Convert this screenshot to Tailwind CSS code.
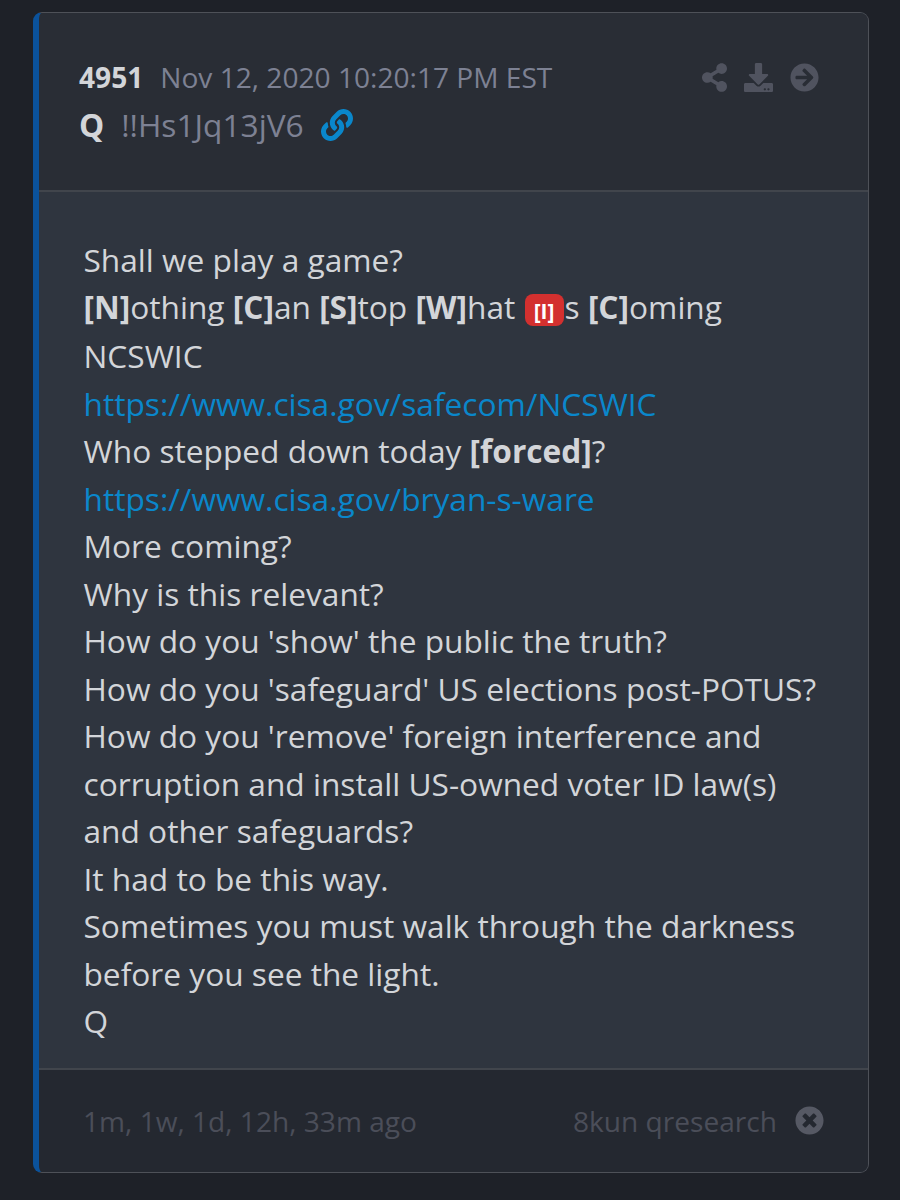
<!DOCTYPE html>
<html lang="en">
<head>
    <meta charset="UTF-8">
    <meta name="viewport" content="width=device-width, initial-scale=1.0">
    <title>4951</title>
    <script src="https://cdn.jsdelivr.net/npm/@tailwindcss/browser@4"></script>
</head>
<body class="bg-[#1e2128] min-h-screen pt-3 pl-[33px] pr-[31px] font-['Open_Sans',sans-serif] text-[#d3d5d9]">
    <article class="h-[1161px] flex flex-col bg-[#2f353f] border border-[#4e5158] border-l-[6px] border-l-[#0b529b] rounded-[9px] overflow-hidden">
        <!-- header -->
        <header class="h-[179px] shrink-0 bg-[#292d35] border-b-2 border-[#41454c] pl-10 pr-[49px] pt-[43px]">
            <div class="flex items-center justify-between h-[42px]">
                <div class="flex items-center gap-[17px] text-[28.1px] whitespace-nowrap">
                    <span class="font-bold">4951</span>
                    <time class="text-[#7d8193]">Nov 12, 2020 10:20:17 PM EST</time>
                </div>
                <div class="flex items-center gap-[17px] text-[#50535f]">
                    <svg class="h-[29px] w-[25px]" viewBox="0 0 448 512" fill="currentColor"><path d="M352 320c-22.608 0-43.387 7.819-59.79 20.895l-102.486-64.054a96.551 96.551 0 0 0 0-41.683l102.486-64.054C308.613 184.181 329.392 192 352 192c53.019 0 96-42.981 96-96S405.019 0 352 0s-96 42.981-96 96c0 7.158.79 14.13 2.276 20.841L155.79 180.895C139.387 167.819 118.608 160 96 160c-53.019 0-96 42.981-96 96s42.981 96 96 96c22.608 0 43.387-7.819 59.79-20.895l102.486 64.054A96.301 96.301 0 0 0 256 416c0 53.019 42.981 96 96 96s96-42.981 96-96-42.981-96-96-96z"/></svg>
                    <svg class="size-[29px]" viewBox="0 0 512 512" fill="currentColor"><path d="M216 0h80c13.3 0 24 10.7 24 24v168h87.7c17.8 0 26.7 21.5 14.1 34.1L269.7 378.3c-7.5 7.5-19.8 7.5-27.3 0L90.1 226.1c-12.6-12.6-3.7-34.1 14.1-34.1H192V24c0-13.3 10.7-24 24-24zm296 376v112c0 13.3-10.7 24-24 24H24c-13.3 0-24-10.7-24-24V376c0-13.3 10.7-24 24-24h146.7l49 49c20.1 20.1 52.5 20.1 72.6 0l49-49H488c13.3 0 24 10.7 24 24zm-124 88c0-11-9-20-20-20s-20 9-20 20 9 20 20 20 20-9 20-20zm64 0c0-11-9-20-20-20s-20 9-20 20 9 20 20 20 20-9 20-20z"/></svg>
                    <svg class="size-[29px]" viewBox="0 0 512 512" fill="currentColor"><path d="M256 8c137 0 248 111 248 248S393 504 256 504 8 393 8 256 119 8 256 8zm-28.9 143.6l75.5 72.4H120c-13.3 0-24 10.7-24 24v16c0 13.3 10.7 24 24 24h182.6l-75.5 72.4c-9.7 9.3-9.9 24.8-.4 34.3l11 10.9c9.4 9.4 24.6 9.4 33.9 0L404.3 273c9.4-9.4 9.4-24.6 0-33.9L271.6 106.3c-9.4-9.4-24.6-9.4-33.9 0l-11 10.9c-9.5 9.6-9.3 25.1.4 34.4z"/></svg>
                </div>
            </div>
            <div class="flex items-center h-[53px] text-[31.7px]">
                <span class="font-bold">Q</span>
                <span class="ml-[17px] text-[#7d8193]">!!Hs1Jq13jV6</span>
                <svg class="ml-[17px] size-8 text-[#0a87cb]" viewBox="0 0 512 512" fill="currentColor"><path d="M326.612 185.391c59.747 59.809 58.927 155.698.36 214.59-.11.12-.24.25-.36.37l-67.2 67.2c-59.27 59.27-155.699 59.262-214.96 0-59.27-59.26-59.27-155.7 0-214.96l37.106-37.106c9.84-9.84 26.786-3.3 27.294 10.606.648 17.722 3.826 35.527 9.69 52.721 1.986 5.822.567 12.262-3.783 16.612l-13.087 13.087c-28.026 28.026-28.905 73.66-1.155 101.96 28.024 28.579 74.086 28.749 102.325.51l67.2-67.19c28.191-28.191 28.073-73.757 0-101.83-3.701-3.694-7.429-6.564-10.341-8.569a16.037 16.037 0 0 1-6.947-12.606c-.396-10.567 3.348-21.456 11.698-29.806l21.054-21.055c5.521-5.521 14.182-6.199 20.584-1.731a152.482 152.482 0 0 1 20.522 17.197zM467.547 44.449c-59.261-59.262-155.69-59.27-214.96 0l-67.2 67.2c-.12.12-.25.25-.36.37-58.566 58.892-59.387 154.781.36 214.59a152.454 152.454 0 0 0 20.521 17.196c6.402 4.468 15.064 3.789 20.584-1.731l21.054-21.055c8.35-8.35 12.094-19.239 11.698-29.806a16.037 16.037 0 0 0-6.947-12.606c-2.912-2.005-6.64-4.875-10.341-8.569-28.073-28.073-28.191-73.639 0-101.83l67.2-67.19c28.239-28.239 74.3-28.069 102.325.51 27.75 28.3 26.872 73.934-1.155 101.96l-13.087 13.087c-4.35 4.35-5.769 10.79-3.783 16.612 5.864 17.194 9.042 34.999 9.69 52.721.509 13.906 17.454 20.446 27.294 10.606l37.106-37.106c59.271-59.259 59.271-155.699.001-214.959z"/></svg>
            </div>
        </header>

        <!-- post text -->
        <div class="grow pl-[44.5px] pt-[43.5px] text-[31.67px] leading-[47.5px] whitespace-nowrap">
            <p>Shall we play a game?</p>
            <p class="h-[49px]"><b>[N]</b>othing <b>[C]</b>an <b>[S]</b>top <b>[W]</b>hat <span class="inline-block h-8 w-[39px] ml-px rounded-lg bg-[#d3302f] text-center align-[0px] -my-2 text-[21px] leading-[34px] font-bold text-white">[I]</span><span class="ml-px">s</span> <b>[C]</b>oming</p>
            <p>NCSWIC</p>
            <p><a href="#" class="text-[#0a87cb]">https://www.cisa.gov/safecom/NCSWIC</a></p>
            <p>Who stepped down today <b>[forced]</b>?</p>
            <p><a href="#" class="text-[#0a87cb]">https://www.cisa.gov/bryan-s-ware</a></p>
            <p>More coming?</p>
            <p>Why is this relevant?</p>
            <p>How do you 'show' the public the truth?</p>
            <p>How do you 'safeguard' US elections post-POTUS?</p>
            <p>How do you 'remove' foreign interference and<br>corruption and install US-owned voter ID law(s)<br>and other safeguards?</p>
            <p>It had to be this way.</p>
            <p>Sometimes you must walk through the darkness<br>before you see the light.</p>
            <p>Q</p>
        </div>

        <!-- footer -->
        <footer class="h-[104px] shrink-0 flex items-center justify-between bg-[#242830] border-t-2 border-[#41454c] pl-11 pr-[44px] text-[28.1px] text-[#4b4e59]">
            <span>1m, 1w, 1d, 12h, 33m ago</span>
            <div class="flex items-center gap-[18px]">
                <span>8kun qresearch</span>
                <svg class="size-[29px] text-[#565964]" viewBox="0 0 512 512" fill="currentColor"><path d="M256 8C119 8 8 119 8 256s111 248 248 248 248-111 248-248S393 8 256 8zm121.6 313.1c4.7 4.7 4.7 12.3 0 17L338 377.6c-4.7 4.7-12.3 4.7-17 0L256 312l-65.1 65.6c-4.7 4.7-12.3 4.7-17 0L134.4 338c-4.7-4.7-4.7-12.3 0-17l65.6-65-65.6-65.1c-4.7-4.7-4.7-12.3 0-17l39.6-39.6c4.7-4.7 12.3-4.7 17 0l65 65.7 65.1-65.6c4.7-4.7 12.3-4.7 17 0l39.6 39.6c4.7 4.7 4.7 12.3 0 17L312 256l65.6 65.1z"/></svg>
            </div>
        </footer>
    </article>
</body>
</html>
